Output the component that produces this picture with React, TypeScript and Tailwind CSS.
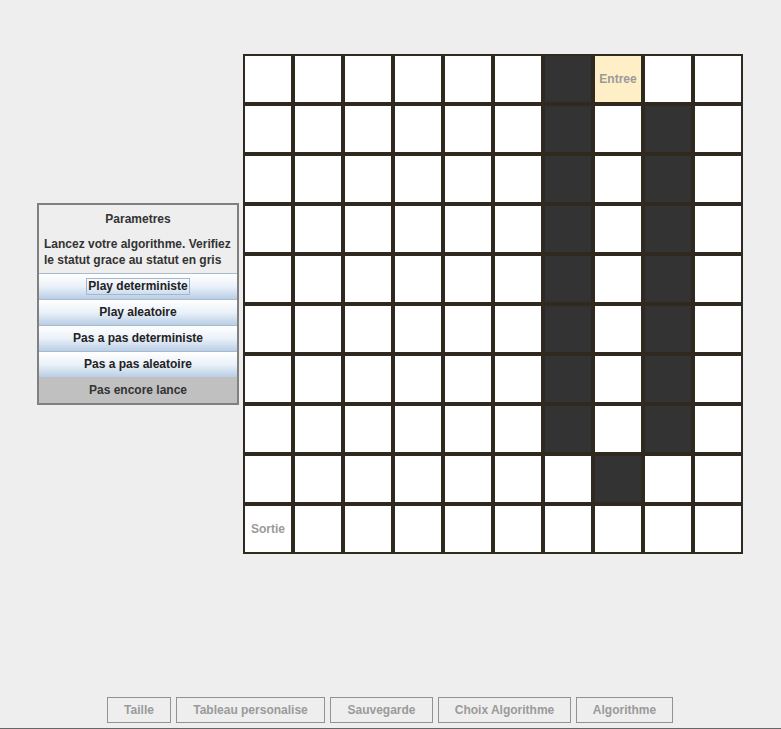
import React from "react";

// cells: 0 = empty, 1 = wall
const walls = new Set<string>();
for (let r = 0; r < 8; r++) walls.add(`${r}-6`);
for (let r = 1; r < 8; r++) walls.add(`${r}-8`);
walls.add("8-7");

const font = { fontFamily: '"Liberation Sans", Arial, sans-serif' };

function Cell({ r, c }: { r: number; c: number }) {
  const wall = walls.has(`${r}-${c}`);
  const entree = r === 0 && c === 7;
  const sortie = r === 9 && c === 0;
  let bg = "bg-white";
  if (wall) bg = "bg-[#333333]";
  if (entree) bg = "bg-[#ffefc6]";
  return (
    <div
      className={`w-[50px] h-[50px] border-2 border-[#302920] flex items-center justify-center text-[12px] font-bold text-[#9a9a9a] ${bg}`}
    >
      {entree ? "Entree" : sortie ? "Sortie" : ""}
    </div>
  );
}

function SideButton({ label, focused }: { label: string; focused?: boolean }) {
  return (
    <div className="h-[26px] flex items-center justify-center border-t border-[#a6bbd0] bg-gradient-to-b from-[#ffffff] via-[#eaf1f9] to-[#b9cee5] text-[12px] font-bold text-[#222]">
      <span className={focused ? "border border-[#a3b8cc] px-[1px] leading-[15px]" : "leading-[15px]"}>
        {label}
      </span>
    </div>
  );
}

export default function App() {
  const rows = Array.from({ length: 10 }, (_, i) => i);
  const bottom: [string, string][] = [
    ["Taille", "w-[64px]"],
    ["Tableau personalise", "w-[149px]"],
    ["Sauvegarde", "w-[103px]"],
    ["Choix Algorithme", "w-[133px]"],
    ["Algorithme", "w-[97px]"],
  ];

  return (
    <div className="w-[781px] h-[729px] bg-[#eeeeee] flex flex-col" style={font}>
      {/* main area */}
      <div className="flex-1 flex items-start pl-[37px] pt-[54px]">
        {/* Parametres panel */}
        <div className="mt-[149px] w-[202px] border-2 border-[#808080] flex flex-col">
          <div className="h-[26px] pt-[2px] flex items-center justify-center text-[12px] font-bold text-[#333]">
            Parametres
          </div>
          <div className="pt-[5px] pb-[5px] pl-[5px] text-[12px] font-bold text-[#333] leading-[16px]">
            Lancez votre algorithme. Verifiez
            <br />
            le statut grace au statut en gris
          </div>
          <SideButton label="Play deterministe" focused />
          <SideButton label="Play aleatoire" />
          <SideButton label="Pas a pas deterministe" />
          <SideButton label="Pas a pas aleatoire" />
          <div className="h-[26px] flex items-center justify-center bg-[#c0c0c0] text-[12px] font-bold text-[#333]">
            Pas encore lance
          </div>
        </div>

        {/* board */}
        <div className="ml-[4px] grid grid-cols-10 w-[500px]">
          {rows.map((r) => rows.map((c) => <Cell key={`${r}-${c}`} r={r} c={c} />))}
        </div>
      </div>

      {/* bottom toolbar */}
      <div className="flex justify-center gap-[5px] pr-[1px]">
        {bottom.map(([label, w]) => (
          <div
            key={label}
            className={`${w} h-[26px] border border-[#929292] flex items-center justify-center text-[12px] font-bold text-[#9a9a9a]`}
          >
            {label}
          </div>
        ))}
      </div>
      <div className="h-[5px]" />
      <div className="h-[1px] bg-[#666666]" />
    </div>
  );
}
